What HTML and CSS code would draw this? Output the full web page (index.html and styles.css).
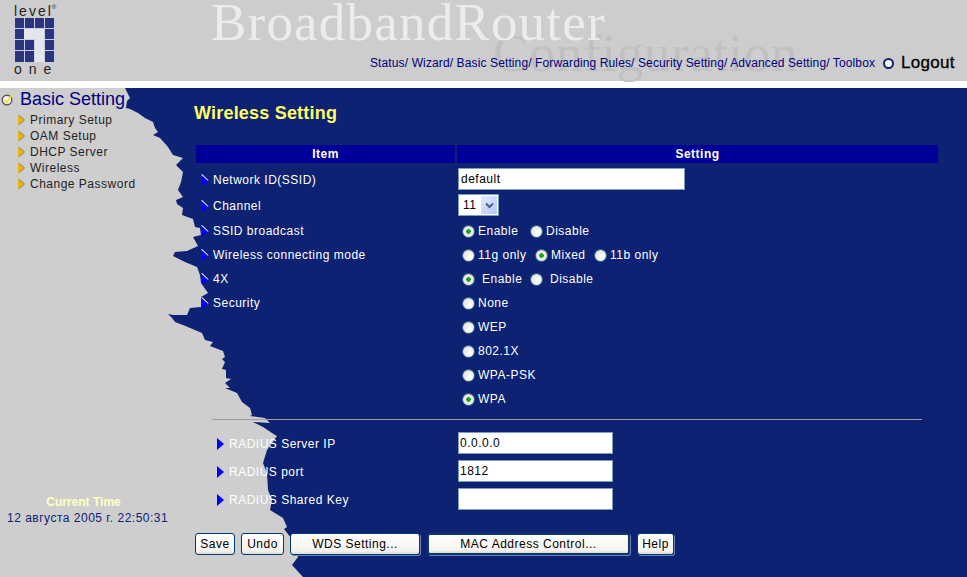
FILE: index.html
```html
<!DOCTYPE html>
<html lang="en">
<head>
    <meta charset="UTF-8">
    <title>Wireless Setting</title>
    <link rel="stylesheet" href="styles.css">
</head>
<body>
    <!-- torn blue paper behind the page -->
    <svg class="torn" viewBox="0 0 967 577" aria-hidden="true">
        <polygon fill="#0d2272" points="125,88 130,98 127,101 126,108 130,109 138,113 145,118 153,122 155,128 158,132 153,135 160,138 168,147 173,155 183,158 176,165 183,172 181,182 178,190 183,197 176,200 177,204 183,208 182,215 193,219 195,227 200,228 201,235 193,237 198,246 187,251 175,252 173,256 185,262 197,267 200,275 201,283 208,293 201,297 201,307 190,308 187,315 173,315 168,314 172,318 175,322 183,325 202,333 205,340 213,342 210,346 223,351 225,357 222,359 225,362 222,369 226,370 226,378 231,379 225,383 230,388 225,388 237,393 242,402 250,408 252,415 250,416 265,418 270,423 253,422 263,427 275,435 277,436 267,450 263,463 267,473 268,490 272,500 270,510 283,518 287,527 284,529 295,543 298,557 292,565 303,577 967,577 967,88"/>
    </svg>

    <header class="top">
        <div class="logo">
            <span class="logo-level">level<sup>®</sup></span>
            <svg class="logo-mark" viewBox="0 0 41 44" aria-hidden="true">
                <rect width="41" height="44" fill="#c8cde0"/>
                <g fill="#2b347f">
                    <rect x="1" y="0" width="9" height="10"/>
                    <rect x="11" y="0" width="9" height="10"/>
                    <rect x="21" y="0" width="9" height="10"/>
                    <rect x="31" y="0" width="9" height="10"/>
                    <rect x="1" y="11" width="9" height="10"/>
                    <rect x="31" y="11" width="9" height="10"/>
                    <rect x="1" y="22" width="9" height="10"/>
                    <rect x="11" y="22" width="9" height="10"/>
                    <rect x="31" y="22" width="9" height="10"/>
                    <rect x="1" y="33" width="9" height="11"/>
                    <rect x="11" y="33" width="9" height="11"/>
                    <rect x="31" y="33" width="9" height="11"/>
                </g>
                <path d="M10 11h20v33h-9V21h-11z" fill="#e4e6ee"/>
            </svg>
            <span class="logo-one">one</span>
        </div>
        <div class="banner-two">Configuration</div>
        <div class="banner-one">BroadbandRouter</div>
        <nav class="topnav">
            <span class="links">Status/ Wizard/ Basic Setting/ Forwarding Rules/ Security Setting/ Advanced Setting/ Toolbox</span>
            <span class="logout-dot"></span>
            <span class="logout">Logout</span>
        </nav>
    </header>

    <div class="content">
        <aside class="side">
            <div class="side-title">
                <svg class="check" viewBox="0 0 13 13" aria-hidden="true">
                    <circle cx="6" cy="7" r="4.8" fill="#f4f4f4" stroke="#55555f" stroke-width="1.4"/>
                    <path d="M3.5 6.5l2.2 3L11.5 1.5" fill="none" stroke="#f5e21c" stroke-width="1.5"/>
                </svg>
                <span>Basic Setting</span>
            </div>
            <ul class="side-menu">
                <li>Primary Setup</li>
                <li>OAM Setup</li>
                <li>DHCP Server</li>
                <li>Wireless</li>
                <li>Change Password</li>
            </ul>
            <div class="clock">
                <div class="clock-label">Current Time</div>
                <div class="clock-date">12 августа 2005 г. 22:50:31</div>
            </div>
        </aside>

        <main class="main">
            <h1>Wireless Setting</h1>

            <div class="head">
                <div>Item</div>
                <div>Setting</div>
            </div>

            <div class="row row-tall">
                <div class="label"><i class="bullet"></i>Network ID(SSID)</div>
                <div class="value"><input class="text wide" type="text" value="default"></div>
            </div>
            <div class="row row-tall">
                <div class="label"><i class="bullet"></i>Channel</div>
                <div class="value">
                    <div class="select">
                        <select><option>11</option></select>
                        <span class="select-arrow">
                            <svg viewBox="0 0 9 7" width="9" height="7" aria-hidden="true"><path d="M1 1.5l3.5 3.5L8 1.5" fill="none" stroke="#4d6185" stroke-width="2"/></svg>
                        </span>
                    </div>
                </div>
            </div>
            <div class="row">
                <div class="label"><i class="bullet"></i>SSID broadcast</div>
                <div class="value opts">
                    <label class="opt w68"><input type="radio" name="ssid" checked>Enable</label>
                    <label class="opt"><input type="radio" name="ssid">Disable</label>
                </div>
            </div>
            <div class="row">
                <div class="label"><i class="bullet"></i>Wireless connecting mode</div>
                <div class="value opts">
                    <label class="opt w73"><input type="radio" name="mode">11g only</label>
                    <label class="opt w59"><input type="radio" name="mode" checked>Mixed</label>
                    <label class="opt"><input type="radio" name="mode">11b only</label>
                </div>
            </div>
            <div class="row">
                <div class="label"><i class="bullet"></i>4X</div>
                <div class="value opts">
                    <label class="opt w68 spaced"><input type="radio" name="fourx" checked>Enable</label>
                    <label class="opt spaced"><input type="radio" name="fourx">Disable</label>
                </div>
            </div>
            <div class="row">
                <div class="label"><i class="bullet"></i>Security</div>
                <div class="value opts"><label class="opt"><input type="radio" name="sec">None</label></div>
            </div>
            <div class="row">
                <div class="label"></div>
                <div class="value opts"><label class="opt"><input type="radio" name="sec">WEP</label></div>
            </div>
            <div class="row">
                <div class="label"></div>
                <div class="value opts"><label class="opt"><input type="radio" name="sec">802.1X</label></div>
            </div>
            <div class="row">
                <div class="label"></div>
                <div class="value opts"><label class="opt"><input type="radio" name="sec">WPA-PSK</label></div>
            </div>
            <div class="row">
                <div class="label"></div>
                <div class="value opts"><label class="opt"><input type="radio" name="sec" checked>WPA</label></div>
            </div>

            <hr class="rule">

            <div class="row row-radius">
                <div class="label indent"><i class="bullet plain"></i>RADIUS Server IP</div>
                <div class="value"><input class="text narrow" type="text" value="0.0.0.0"></div>
            </div>
            <div class="row row-radius">
                <div class="label indent"><i class="bullet plain"></i>RADIUS port</div>
                <div class="value"><input class="text narrow" type="text" value="1812"></div>
            </div>
            <div class="row row-radius">
                <div class="label indent"><i class="bullet plain"></i>RADIUS Shared Key</div>
                <div class="value"><input class="text narrow" type="text"></div>
            </div>

            <div class="buttons">
                <button class="btn-save">Save</button>
                <button class="btn-undo">Undo</button>
                <button class="btn-wds">WDS Setting...</button>
                <button class="btn-mac">MAC Address Control...</button>
                <button class="btn-help">Help</button>
            </div>
        </main>
    </div>
</body>
</html>
```

FILE: styles.css
```css
html, body {
    margin: 0;
    padding: 0;
    height: 577px;
    overflow: hidden;
}

body {
    position: relative;
    background-color: #cecece;
    font-family: "Liberation Sans", Arial, sans-serif;
    font-size: 12px;
    letter-spacing: 0.5px;
    color: #fff;
}

.torn {
    position: absolute;
    left: 0;
    top: 0;
    width: 967px;
    height: 577px;
    z-index: -1;
}

/* top banner */
.top {
    position: relative;
    height: 81px;
    border-bottom: 7px solid #fff;
    background-color: #cdcdcd;
}

.logo {
    position: absolute;
    left: 14px;
    top: 4px;
    width: 41px;
    display: flex;
    flex-direction: column;
    align-items: flex-start;
    color: #222;
}

.logo-level, .logo-one {
    font-size: 14px;
    line-height: 14px;
    letter-spacing: 2px;
}

.logo-level sup {
    font-size: 6px;
    line-height: 0;
    letter-spacing: 0;
    vertical-align: 7px;
    margin-left: -1px;
}

.logo-one {
    letter-spacing: 7px;
    line-height: 12px;
    margin-top: 1px;
}

.logo-mark {
    width: 41px;
    height: 44px;
    display: block;
}

.banner-one, .banner-two {
    position: absolute;
    font-family: "Liberation Serif", serif;
    font-size: 53px;
    line-height: 44px;
    white-space: nowrap;
}

.banner-one {
    left: 211px;
    top: 0;
    letter-spacing: 1.2px;
    color: #ececec;
}

.banner-two {
    left: 493px;
    top: 31px;
    letter-spacing: 0.6px;
    color: #c0c0c0;
}

.topnav {
    position: absolute;
    left: 370px;
    top: 53px;
    display: flex;
    align-items: center;
    white-space: nowrap;
}

.links {
    color: #000080;
    font-size: 12px;
    letter-spacing: 0.12px;
    width: 513px;
}

.logout-dot {
    width: 7px;
    height: 7px;
    border: 2px solid #0d2272;
    border-radius: 50%;
    background-color: #fff;
    margin-right: 7px;
}

.logout {
    color: #000;
    font-size: 17px;
    letter-spacing: 0.3px;
    -webkit-text-stroke: 0.3px #000;
}

/* below the banner */
.content {
    display: flex;
    height: 489px;
}

.side {
    width: 196px;
    flex: none;
    display: flex;
    flex-direction: column;
    color: #222;
}

.side-title {
    display: flex;
    align-items: center;
    gap: 6px;
    height: 22px;
    padding-left: 1px;
    color: #000080;
    font-size: 18px;
    letter-spacing: 0;
}

.check {
    width: 13px;
    height: 13px;
    flex: none;
}

.side-menu {
    list-style: none;
    margin: 2px 0 0;
    padding: 0 0 0 18px;
}

.side-menu li {
    height: 16px;
    line-height: 16px;
    display: flex;
    align-items: center;
}

.side-menu li::before {
    content: "";
    width: 0;
    height: 0;
    border-left: 6px solid #f0b400;
    border-top: 5px solid transparent;
    border-bottom: 5px solid transparent;
    margin-right: 6px;
    filter: drop-shadow(1px 0 0 #77715a);
}

.clock {
    margin-top: auto;
    margin-bottom: 51px;
    width: 167px;
    text-align: center;
    line-height: 16px;
}

.clock-label {
    color: #ffffc4;
    font-weight: bold;
    letter-spacing: 0;
}

.clock-date {
    color: #0d2272;
    white-space: nowrap;
    margin-left: 7px;
}

/* main form */
.main {
    flex: 1;
    padding-right: 29px;
}

.main h1 {
    margin: 0 0 20px -2px;
    padding-top: 14px;
    font-size: 18px;
    line-height: 23px;
    letter-spacing: 0.2px;
    color: #ffff66;
}

.head {
    display: grid;
    grid-template-columns: 259px 1fr;
    gap: 2px;
    height: 18px;
    line-height: 18px;
    margin-bottom: 4px;
    text-align: center;
    font-weight: bold;
}

.head div {
    background-color: #000099;
}

.row {
    display: grid;
    grid-template-columns: 261px 1fr;
    height: 24px;
    align-items: center;
}

.row-tall {
    height: 26px;
}

.row-radius {
    height: 28px;
}

.label {
    display: flex;
    align-items: center;
    padding-left: 6px;
}

.label.indent {
    padding-left: 21px;
}

.bullet {
    width: 8px;
    height: 13px;
    margin-right: 3px;
    flex: none;
    position: relative;
}

/* blue arrow head with a thin white top edge */
.bullet::before {
    content: "";
    position: absolute;
    left: 0;
    top: 0;
    width: 0;
    height: 0;
    border-left: 7px solid #0000ff;
    border-top: 6.5px solid transparent;
    border-bottom: 6.5px solid transparent;
}

.bullet::after {
    content: "";
    position: absolute;
    left: 0;
    top: 0;
    width: 9px;
    height: 1px;
    background-color: #fff;
    transform: rotate(43deg);
    transform-origin: 0 0;
}

.bullet.plain {
    margin-right: 4px;
}

.bullet.plain::after {
    display: none;
}

.value {
    padding-left: 1px;
}

.text {
    box-sizing: border-box;
    height: 22px;
    display: block;
    margin-bottom: 2px;
    border: 1px solid #7f9db9;
    padding: 0 1px;
    background-color: #fff;
    font-family: "Liberation Sans", Arial, sans-serif;
    font-size: 12px;
    letter-spacing: 0.5px;
    color: #000;
    outline: none;
}

.wide {
    width: 227px;
    padding-left: 2px;
}

.narrow {
    width: 155px;
}

.select {
    position: relative;
    width: 41px;
    height: 22px;
    margin-bottom: 2px;
}

.select select {
    appearance: none;
    box-sizing: border-box;
    width: 41px;
    height: 22px;
    border: 1px solid #7f9db9;
    border-radius: 0;
    padding: 0 0 0 4px;
    background-color: #fff;
    font-family: "Liberation Sans", Arial, sans-serif;
    font-size: 12px;
    letter-spacing: 0.5px;
    color: #000;
}

.select-arrow {
    position: absolute;
    right: 2px;
    top: 2px;
    width: 16px;
    height: 18px;
    display: flex;
    align-items: center;
    justify-content: center;
    background: linear-gradient(135deg, #e0e8fd, #b7cbf5);
    border-radius: 1px;
    pointer-events: none;
}

.opts {
    display: flex;
    padding-left: 6px;
}

.opt {
    display: flex;
    align-items: center;
    white-space: nowrap;
}

.w68 { width: 68px; }
.w73 { width: 73px; }
.w59 { width: 59px; }

.opt input {
    appearance: none;
    width: 11px;
    height: 11px;
    margin: 0 4px 0 0;
    border-radius: 50%;
    flex: none;
    background: radial-gradient(circle at 65% 65%, #fff, #dcd9d0);
    box-shadow: 0 0 0 1px #2f6a8a;
}

.opt input:checked {
    background: radial-gradient(circle, #21a121 0, #21a121 2px, #f2f2ec 2.6px, #dcd9d0 100%);
}

.opt.spaced input {
    margin-right: 8px;
}

.rule {
    height: 1px;
    border: 0;
    margin: 8px 16px 10px;
    background-color: #9c9c9c;
}

.buttons {
    display: flex;
    align-items: center;
    gap: 6px;
    margin: 19px 0 0 -1px;
}

.buttons button {
    box-sizing: border-box;
    height: 22px;
    padding: 0;
    border: 1px solid #003c74;
    border-radius: 3px;
    background: linear-gradient(#ffffff, #f4f3ee 85%, #dcd8ce);
    font-family: "Liberation Sans", Arial, sans-serif;
    font-size: 12px;
    letter-spacing: 0.5px;
    color: #000;
}

.btn-save { width: 40px; }
.btn-undo { width: 43px; }
.btn-wds, .btn-help { box-shadow: 1px 1px 0 #6d84b4; }
.btn-wds { width: 130px; }
.btn-help { width: 37px; }

.buttons .btn-mac {
    width: 203px;
    margin: 0 1px;
    border: 2px solid #0a3a6e;
    box-shadow: 1px 1px 0 #6d84b4;
}
```
